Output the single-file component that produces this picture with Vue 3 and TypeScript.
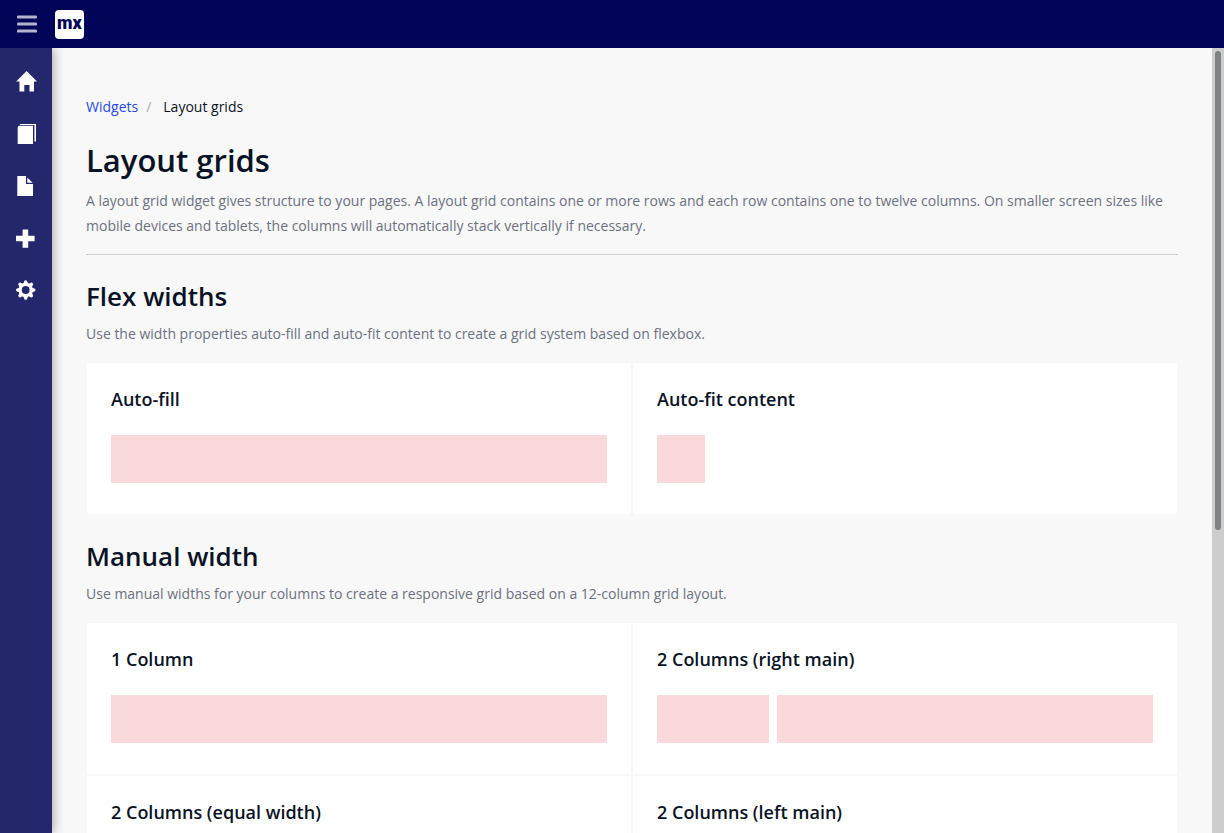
<script setup lang="ts">
interface Example {
  title: string
  layout: 'full' | 'fit' | 'right-main' | 'equal' | 'left-main'
  columns: number
}

interface Section {
  id: string
  title: string
  description: string
  examples: Example[]
}

const sections: Section[] = [
  {
    id: 'flex-widths',
    title: 'Flex widths',
    description: 'Use the width properties auto-fill and auto-fit content to create a grid system based on flexbox.',
    examples: [
      { title: 'Auto-fill', layout: 'full', columns: 1 },
      { title: 'Auto-fit content', layout: 'fit', columns: 1 },
    ],
  },
  {
    id: 'manual-width',
    title: 'Manual width',
    description: 'Use manual widths for your columns to create a responsive grid based on a 12-column grid layout.',
    examples: [
      { title: '1 Column', layout: 'full', columns: 1 },
      { title: '2 Columns (right main)', layout: 'right-main', columns: 2 },
      { title: '2 Columns (equal width)', layout: 'equal', columns: 2 },
      { title: '2 Columns (left main)', layout: 'left-main', columns: 2 },
    ],
  },
]
</script>

<template>
  <div class="app">
    <header class="topbar">
      <button class="toggle" type="button" aria-label="Toggle menu">
        <svg width="20" height="18" viewBox="0 0 20 18" aria-hidden="true">
          <rect width="20" height="3" y="0.4" rx="1.2" />
          <rect width="20" height="3" y="7.5" rx="1.2" />
          <rect width="20" height="3" y="14.600" rx="1.2" />
        </svg>
      </button>
      <a class="logo" href="#" aria-label="Home"><span>mx</span></a>
    </header>

    <div class="body">
      <nav class="sidebar" aria-label="Main">
        <a href="#" aria-label="Home">
          <svg viewBox="0 0 22 22"><path d="M11.600 0 22 10.500h-3V20.500h-4.500V14H9.300v6.500H4.500V10.500H1.200z" /></svg>
        </a>
        <a href="#" aria-label="Templates">
          <svg viewBox="0 0 22 22">
            <path d="M2.700 4 4 2.700H18V21H2.700zM5.500 1H21V18.500h-1.600V2.100H4.500z" />
          </svg>
        </a>
        <a href="#" aria-label="Pages">
          <svg viewBox="0 0 22 22"><path d="M2.300 1h8.700v8H18v12H2.300zM12.300 2.500 17.600 7.700h-5.300z" /></svg>
        </a>
        <a href="#" aria-label="Widgets">
          <svg viewBox="0 0 22 22"><path d="M7.600 2.500h5.600v6.300h6.400v5.400h-6.400v6.500H7.600v-6.500H1V8.800h6.600z" /></svg>
        </a>
        <a href="#" aria-label="Settings">
          <svg viewBox="0 0 22 22">
            <g transform="translate(10.700 11)">
              <path
                fill-rule="evenodd"
                d="M-7.200 0a7.200 7.200 0 1 0 14.400 0a7.200 7.200 0 1 0-14.400 0M-3.900 0a3.900 3.900 0 1 1 7.800 0a3.900 3.900 0 1 1-7.800 0"
              />
              <path
                v-for="angle in [0, 45, 90, 135, 180, 225, 270, 315]"
                :key="angle"
                d="M-2.500-6 L-1.300-9.200Q0-10.500 1.300-9.200L2.500-6z"
                :transform="`rotate(${angle})`"
              />
            </g>
          </svg>
        </a>
      </nav>

      <main class="content">
        <nav class="breadcrumb" aria-label="Breadcrumb">
          <a href="#">Widgets</a>
          <span class="separator">/</span>
          <span>Layout grids</span>
        </nav>

        <div class="intro">
          <h1>Layout grids</h1>
          <p>
            A layout grid widget gives structure to your pages. A layout grid contains one or more rows and each row
            contains one to twelve columns. On smaller screen sizes like mobile devices and tablets, the columns will
            automatically stack vertically if necessary.
          </p>
        </div>

        <section v-for="section in sections" :key="section.id" class="section">
          <h2>{{ section.title }}</h2>
          <p>{{ section.description }}</p>
          <div class="cards">
            <article v-for="example in section.examples" :key="example.title" class="card">
              <h3>{{ example.title }}</h3>
              <div class="demo" :class="example.layout">
                <div v-for="n in example.columns" :key="n" class="block"></div>
              </div>
            </article>
          </div>
        </section>
      </main>

      <div class="scrollbar" aria-hidden="true"><div class="thumb"></div></div>
    </div>
  </div>
</template>

<style>
body {
  margin: 0;
}
</style>

<style scoped>
.app {
  display: flex;
  flex-direction: column;
  height: 100vh;
  overflow: hidden;
  background: #f8f8f8;
  color: #0a1325;
  font-family: 'Open Sans', sans-serif;
  font-size: 14px;
  line-height: 20px;
}

.topbar {
  display: flex;
  flex: none;
  align-items: center;
  gap: 16px;
  height: 48px;
  padding-left: 15px;
  background: #020557;
}

.toggle {
  display: flex;
  padding: 2px;
  border: 0;
  background: none;
  cursor: pointer;
}

.toggle svg {
  fill: #b3b4cd;
}

.logo {
  display: flex;
  align-items: center;
  justify-content: center;
  width: 29px;
  height: 29px;
  border-radius: 4px;
  background: #fff;
  color: #020557;
  font-family: Roboto, sans-serif;
  font-size: 18px;
  font-weight: 900;
  line-height: 24px;
  text-decoration: none;
}

.logo span {
  padding-bottom: 2px;
}

.body {
  display: flex;
  flex: 1;
  min-height: 0;
}

.sidebar {
  z-index: 1;
  display: flex;
  flex: none;
  flex-direction: column;
  width: 52px;
  padding-top: 8px;
  box-sizing: border-box;
  background: #24276c;
  box-shadow: 2px 0 10px rgba(0, 0, 0, 0.3);
  clip-path: inset(0 -20px 0 0);
}

.sidebar a {
  display: flex;
  align-items: center;
  height: 52px;
  padding-left: 15px;
}

.sidebar svg {
  width: 22px;
  height: 22px;
  fill: #fff;
}

.content {
  flex: 1;
  min-width: 0;
  padding: 48px 34px 0;
  overflow: hidden;
}

.breadcrumb {
  display: flex;
  gap: 8px;
  padding-top: 1px;
}

.breadcrumb a {
  color: #264ae5;
  text-decoration: none;
}

.separator {
  margin-right: 4px;
  color: #a9acb3;
}

h1,
h2,
h3,
p {
  margin: 0;
}

h1,
h2,
h3 {
  font-weight: 600;
}

p {
  color: #6c7180;
  line-height: 25px;
}

.intro {
  padding: 23px 0 16px;
  border-bottom: 1px solid #ced0d3;
}

h1 {
  margin-bottom: 8px;
  font-size: 31px;
  line-height: 40px;
}

.section {
  padding-top: 24px;
}

h2 {
  margin-bottom: 8px;
  font-size: 26px;
  line-height: 34px;
}

.cards {
  display: grid;
  grid-template-columns: repeat(2, 1fr);
  margin-top: 16px;
}

.card {
  padding: 24px 24px 31px;
  border: 1px solid #f7f7f7;
  background: #fff;
}

h3 {
  margin-bottom: 24px;
  font-size: 18px;
  line-height: 24px;
}

.demo {
  display: grid;
  gap: 8px;
}

.fit {
  grid-template-columns: 48px;
}

.right-main {
  grid-template-columns: 14fr 47fr;
}

.equal {
  grid-template-columns: 1fr 1fr;
}

.left-main {
  grid-template-columns: 47fr 14fr;
}

.block {
  height: 48px;
  background: #f9d9dc;
}

.scrollbar {
  flex: none;
  width: 12px;
  padding: 3px;
  box-sizing: border-box;
  background: #cdcdcd;
}

.thumb {
  height: 61.5%;
  border-radius: 3px;
  background: #7e8282;
}
</style>
